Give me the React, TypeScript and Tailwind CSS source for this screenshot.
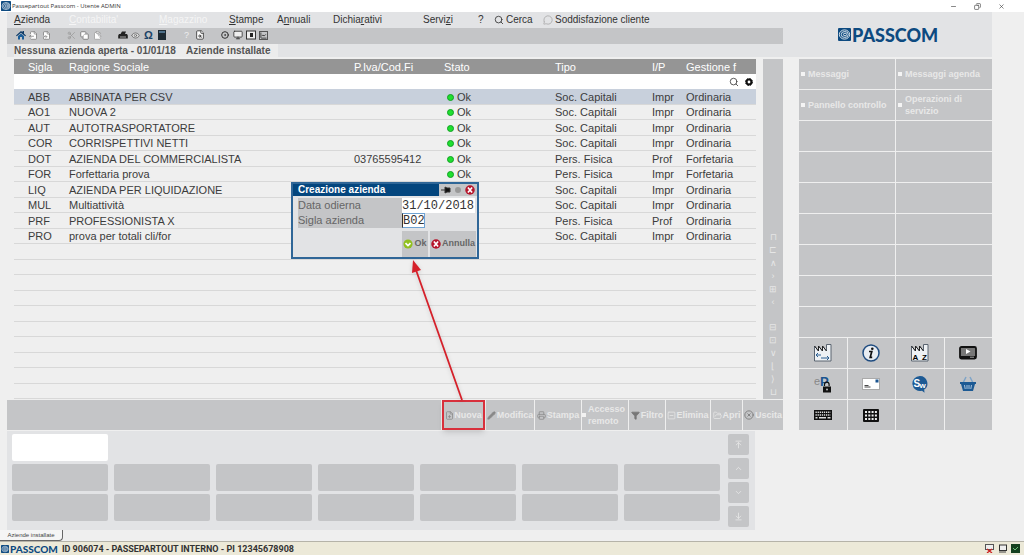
import type { ReactNode } from "react";
import {
    Search, FileOutput, FileSymlink, Scissors, Copy, ClipboardPaste, Printer, Pencil,
    Eye, MessageCircle, Minus, X, Copy as Restore, Monitor, ChartLine, CircleDot,
    FileSearch, Filter, SquareMinus, FolderOpen, CircleX, FilePlus, ArrowUpToLine, ChevronUp, ChevronDown,
    ArrowDownToLine,
} from "lucide-react";

const companies = [
    ["ABB", "ABBINATA PER CSV", "", "Soc. Capitali", "Impr", "Ordinaria"],
    ["AO1", "NUOVA 2", "", "Soc. Capitali", "Impr", "Ordinaria"],
    ["AUT", "AUTOTRASPORTATORE", "", "Soc. Capitali", "Impr", "Ordinaria"],
    ["COR", "CORRISPETTIVI NETTI", "", "Soc. Capitali", "Impr", "Ordinaria"],
    ["DOT", "AZIENDA DEL COMMERCIALISTA", "03765595412", "Pers. Fisica", "Prof", "Forfetaria"],
    ["FOR", "Forfettaria prova", "", "Pers. Fisica", "Impr", "Forfetaria"],
    ["LIQ", "AZIENDA PER LIQUIDAZIONE", "", "Soc. Capitali", "Impr", "Ordinaria"],
    ["MUL", "Multiattività", "", "Soc. Capitali", "Impr", "Ordinaria"],
    ["PRF", "PROFESSIONISTA X", "", "Pers. Fisica", "Prof", "Ordinaria"],
    ["PRO", "prova per totali cli/for", "", "Soc. Capitali", "Impr", "Ordinaria"],
];

const shortcuts = ["Messaggi", "Messaggi agenda", "Pannello controllo", "Operazioni di servizio"];

function Spiral({ className }: { className: string }) {
    return (
        <svg viewBox="0 0 24 24" className={className} fill="none" stroke="#fff" strokeWidth="1.5">
            <rect width="24" height="24" rx="2" fill="#0d4a80" stroke="none" />
            <ellipse cx="12" cy="12" rx="9.5" ry="8.5" />
            <ellipse cx="12.5" cy="12" rx="6.5" ry="5.5" />
            <ellipse cx="13" cy="12" rx="3" ry="2.4" />
        </svg>
    );
}

function MenuBar() {
    return (
        <nav className="flex h-4 items-center pl-[7px] text-[10px] leading-4 whitespace-nowrap text-[#333]">
            <a href="#azienda" className="w-[55px]"><u>A</u>zienda</a>
            <a href="#contabilita" className="w-[90px] text-[#f5f5f5]"><u>C</u>ontabilita'</a>
            <a href="#magazzino" className="w-[70px] text-[#f5f5f5]"><u>M</u>agazzino</a>
            <a href="#stampe" className="w-12"><u>S</u>tampe</a>
            <a href="#annuali" className="w-14">A<u>n</u>nuali</a>
            <a href="#dichiarativi" className="w-[90px]">Dichia<u>r</u>ativi</a>
            <a href="#servizi" className="w-[55px]">Servi<u>z</u>i</a>
            <a href="#aiuto" className="w-4">?</a>
            <a href="#cerca" className="flex w-[49px] items-center gap-0.5"><Search size={10} />Cerca</a>
            <a href="#soddisfazione" className="flex items-center gap-0.5"><MessageCircle size={10} className="text-[#aaa]" />Soddisfazione cliente</a>
        </nav>
    );
}

function Tool({ label, children }: { label: string; children: ReactNode }) {
    return <button aria-label={label} className="flex h-3.5 w-[13px] items-center justify-center">{children}</button>;
}

function ToolBar() {
    return (
        <div className="flex h-4 gap-3 bg-[#c4c5c7] pl-[7px] text-[#333]">
            <div className="flex">
                <Tool label="Home">
                    <svg viewBox="0 0 10 10" className="size-2.5"><path d="M0 5.500L5 1l1.500 1.300V1H8v2.700l2 1.800-.8.800L5 2.800.8 6.300z" fill="#0d3a66" /><path d="M2 6l3-2.500L8 6v3.500H6V7H4v2.500H2z" fill="#1b5e99" /></svg>
                </Tool>
                <Tool label="Esci"><FileOutput size={9} fill="#fff" className="text-[#777]" /></Tool>
                <Tool label="Collega"><FileSymlink size={9} fill="#fff" className="text-[#777]" /></Tool>
            </div>
            <div className="flex">
                <Tool label="Taglia"><Scissors size={9} className="text-[#999]" /></Tool>
                <Tool label="Copia"><Copy size={9} fill="#fff" className="text-[#666]" /></Tool>
                <Tool label="Incolla"><ClipboardPaste size={9} fill="#fff" className="text-[#999]" /></Tool>
            </div>
            <div className="flex">
                <Tool label="Stampa">
                    <svg viewBox="0 0 10 10" className="size-2.5"><path d="M2.500 4L4 1.500h4L7 4h2l.8 1.500V8.500H.2V5.500L1 4z" fill="#222" /><path d="M2 7h6" stroke="#aaa" /></svg>
                </Tool>
                <Tool label="Anteprima"><Eye size={9} fill="#ddd" className="text-[#666]" /></Tool>
                <Tool label="Simboli"><span className="text-[11px] leading-3 font-bold text-[#1c4468]">Ω</span></Tool>
                <Tool label="Calcolatrice">
                    <svg viewBox="0 0 8 10" className="h-2.5 w-2"><rect width="8" height="10" fill="#1d2a33" /><path d="M1 2h6" stroke="#5f88a8" strokeWidth="1.500" /></svg>
                </Tool>
            </div>
            <div className="flex">
                <Tool label="Aiuto"><span className="text-[9px] leading-3 text-[#eee]">?</span></Tool>
                <Tool label="Cerca documento"><FileSearch size={10} fill="#fff" /></Tool>
            </div>
            <div className="flex">
                <Tool label="Registra"><CircleDot size={8} strokeWidth={3} /></Tool>
                <Tool label="Schermo"><Monitor size={10} fill="#eee" /></Tool>
                <Tool label="Pannello">
                    <svg viewBox="0 0 10 10" className="size-2.5"><rect x=".5" y="1" width="9" height="8" fill="#eee" stroke="#333" /><path d="M4 3h3v4H4z" fill="#222" /></svg>
                </Tool>
                <Tool label="Grafico"><ChartLine size={9} strokeWidth={3} className="border border-[#555]" /></Tool>
            </div>
        </div>
    );
}

function CompanyTable() {
    return (
        <table className="min-w-0 flex-1 table-fixed border-separate border-spacing-0 text-left text-[11px] leading-[14px] whitespace-nowrap text-[#3c3c3c]">
            <colgroup>
                <col className="w-[55px]" />
                <col />
                <col className="w-[90px]" />
                <col className="w-[111px]" />
                <col className="w-[97px]" />
                <col className="w-[34px]" />
                <col className="w-[70px]" />
            </colgroup>
            <thead>
                <tr className="h-[15px] bg-[#959595] text-white [&>th]:p-0 [&>th]:font-normal">
                    <th><span className="pl-3.5">Sigla</span></th>
                    <th>Ragione Sociale</th>
                    <th>P.Iva/Cod.Fi</th>
                    <th>Stato</th>
                    <th>Tipo</th>
                    <th>I/P</th>
                    <th>Gestione f</th>
                </tr>
                <tr className="h-[15px] bg-white">
                    <td colSpan={7} className="p-0">
                        <div className="flex h-[15px] items-center gap-1.5 pr-[3px]">
                            <input aria-label="Filtra aziende" className="h-3 min-w-0 flex-1 outline-none" />
                            <button aria-label="Cerca"><Search size={10} /></button>
                            <button aria-label="Impostazioni">
                                <svg viewBox="0 0 10 10" className="size-2">
                                    <circle cx="5" cy="5" r="3" fill="none" stroke="#111" strokeWidth="2.500" />
                                    <circle cx="5" cy="5" r="4.400" fill="none" stroke="#111" strokeWidth="1.200" strokeDasharray="2 1.450" />
                                </svg>
                            </button>
                        </div>
                    </td>
                </tr>
            </thead>
            <tbody>
                {companies.map(([code, name, vat, type, ip, mode]) => (
                    <tr key={code} className="odd:h-4 even:h-[15px] first:bg-[#c8d0dc] [&>td]:border-b [&>td]:border-[#d8d8d8] [&>td]:p-0">
                        <td><span className="pl-3.5">{code}</span></td>
                        <td>{name}</td>
                        <td>{vat}</td>
                        <td>
                            <span className="ml-[3px] inline-block size-[7px] rounded-full border border-[#12a024] bg-[#1fe02f]" /> Ok
                        </td>
                        <td>{type}</td>
                        <td>{ip}</td>
                        <td>{mode}</td>
                    </tr>
                ))}
                {Array.from({ length: 10 }, (_, i) => (
                    <tr key={i} className="odd:h-4 even:h-[15px]">
                        <td colSpan={7} className="border-b border-[#d8d8d8] p-0" />
                    </tr>
                ))}
            </tbody>
        </table>
    );
}

function ScrollStrip() {
    const glyphs = ["⊓", "⊏", "∧", "›", "⊞", "‹"];
    const lower = ["⊟", "⊡", "∨", "⌊", "⟩", "⊔"];
    return (
        <div className="flex w-5 flex-col items-center justify-end gap-3 bg-[#c4c5c7] text-[9px] leading-[13px] text-[#e6e6e6]">
            <div className="flex flex-col items-center">{glyphs.map((g) => <span key={g}>{g}</span>)}</div>
            <div className="flex flex-col items-center">{lower.map((g) => <span key={g}>{g}</span>)}</div>
        </div>
    );
}

function RoundX() {
    return (
        <svg viewBox="0 0 12 12" className="size-2.5 shrink-0">
            <circle cx="6" cy="6" r="5.7" fill="#b5152b" />
            <path d="M3.5 3l5 6M8.5 3l-5 6" stroke="#fff" strokeWidth="2" />
        </svg>
    );
}

function NewCompanyDialog() {
    return (
        <form className="absolute top-[123px] left-[284px] flex h-[77px] w-[188px] flex-col border-2 border-[#2f6697] bg-[#e2e3e5] text-[11px] text-[#666]">
            <div className="flex h-3 items-center bg-[#04467e]">
                <h2 className="flex-1 pl-[5px] text-[10px] leading-3 font-bold text-white">Creazione azienda</h2>
                <div className="flex h-3 items-center gap-1 bg-[#c4c5c7] px-0.5">
                    <svg viewBox="0 0 10 8" className="h-2 w-2.5"><path d="M0 4h4M4 1l2 1h3v4H6L4 7z" fill="#111" stroke="#333" /></svg>
                    <span className="size-1.5 rounded-full bg-[#999]" />
                    <button type="button" aria-label="Chiudi"><RoundX /></button>
                </div>
            </div>
            <div className="mt-0.5 flex h-[15px] pl-[5px]">
                <label htmlFor="data" className="w-[104px] bg-[#c4c5c7] leading-[14px]">Data odierna</label>
                <input id="data" defaultValue="31/10/2018" className="h-[15px] w-[73px] bg-white font-['Liberation_Mono',monospace] text-xs text-[#333]" />
            </div>
            <div className="flex h-[15px] pl-[5px]">
                <label htmlFor="sigla" className="w-[104px] bg-[#c4c5c7] leading-[15px]">Sigla azienda</label>
                <input id="sigla" defaultValue="B02" className="h-[15px] w-[23px] border border-[#6fa3d3] border-l-[#333] bg-white font-['Liberation_Mono',monospace] text-xs text-[#333]" />
            </div>
            <div className="flex flex-1 items-end justify-end gap-0.5 pr-px text-[9px] font-bold">
                <button type="button" className="flex h-[26px] w-[26px] items-center justify-center gap-px bg-[#c4c5c7]">
                    <svg viewBox="0 0 12 12" className="size-2.5 shrink-0"><circle cx="6" cy="6" r="5.5" fill="#91c01f" /><path d="M3 5l3 3 3-3" fill="none" stroke="#fff" strokeWidth="2" /></svg>
                    Ok
                </button>
                <button type="button" className="flex h-[26px] w-[46px] items-center justify-center gap-px bg-[#c4c5c7]"><RoundX />Annulla</button>
            </div>
        </form>
    );
}

function ActionBar() {
    const base = "flex items-center justify-center bg-[#c4c5c7]";
    return (
        <div className="mt-px flex h-[30px] gap-px text-[9px] leading-3 font-bold text-[#e8e8e8]">
            <div className="flex-1 bg-[#c4c5c7]" />
            <button className={`${base} w-[43px] border-2 border-[#d8303c] shadow-md`}><FilePlus size={9} className="text-[#888]" />Nuova</button>
            <button className={`${base} w-12 gap-px`}><Pencil size={9} fill="#888" className="text-[#888]" />Modifica</button>
            <button className={`${base} w-[46px] gap-px`}><Printer size={9} className="text-[#888]" />Stampa</button>
            <button className={`${base} w-[46px] gap-0.5 text-left`}><span className="size-1 shrink-0 bg-[#f2f2f2]" /><span>Accesso remoto</span></button>
            <button className={`${base} w-9 gap-px`}><Filter size={9} fill="#777" className="text-[#777]" />Filtro</button>
            <button className={`${base} w-11`}><SquareMinus size={9} />Elimina</button>
            <button className={`${base} w-[31px] gap-px`}><FolderOpen size={9} />Apri</button>
            <button className={`${base} w-10 gap-px`}><CircleX size={10} className="text-[#777]" />Uscita</button>
        </div>
    );
}

function Factory({ children }: { children: ReactNode }) {
    return (
        <svg viewBox="0 0 18 18" className="size-[18px]">
            <path d="M.5 17V2l4 5V2l4 5V2l4 5V.5h4.5V17z" fill="#eef1f4" stroke="#5a6470" />
            <path d="M.5 2l4 5V2l4 5V2l4 5" fill="none" stroke="#222" />
            {children}
        </svg>
    );
}

function AppIcons() {
    const cell = "flex items-center justify-center bg-[#c4c5c7]";
    return (
        <div className="grid auto-rows-[30px] grid-cols-4 gap-px">
            <button aria-label="Cambia azienda" className={cell}>
                <Factory><path d="M2 11h5M4 9l-2 2 2 2M7 14h8M13 12l2 2-2 2" fill="none" stroke="#2b5f92" /></Factory>
            </button>
            <button aria-label="Informazioni" className={cell}>
                <svg viewBox="0 0 18 18" className="size-[18px]">
                    <circle cx="9" cy="9" r="8" fill="#e9edf2" stroke="#1f4c80" strokeWidth="1.5" />
                    <circle cx="10.3" cy="4.8" r="1.3" fill="#111" />
                    <path d="M7 7.5h2.8L8.2 13.3h2" fill="none" stroke="#111" strokeWidth="1.7" />
                </svg>
            </button>
            <button aria-label="Aziende A-Z" className={cell}>
                <Factory><text x="1.5" y="15.5" fontSize="8" fontWeight="bold">A</text><text x="11" y="15.5" fontSize="8" fontWeight="bold">Z</text></Factory>
            </button>
            <button aria-label="Video" className={cell}>
                <svg viewBox="0 0 18 14" className="h-3.5 w-[18px]">
                    <rect x="1" y="1" width="16" height="11.5" rx="1.5" fill="#777" stroke="#111" strokeWidth="1.8" />
                    <path d="M1 10h16v2.5H1z" fill="#111" /><path d="M7 3l4.500 2.500L7 8z" fill="#fff" />
                    <path d="M11 11.200h4" stroke="#ccc" strokeWidth=".8" />
                </svg>
            </button>
            <button aria-label="ePass" className={cell}>
                <svg viewBox="0 0 18 18" className="size-[18px]">
                    <text x="0" y="10" fontSize="11" fill="#888">e</text>
                    <text x="6" y="11" fontSize="13" fontWeight="bold" fill="#1b5590">P</text>
                    <path d="M10.500 11V9.500a2.300 2.300 0 0 1 4.600 0V11" fill="none" stroke="#111" strokeWidth="1.200" />
                    <rect x="9" y="11.500" width="8" height="6" fill="#111" /><circle cx="13" cy="14.500" r="1" fill="#bbb" />
                </svg>
            </button>
            <button aria-label="Posta" className={cell}>
                <svg viewBox="0 0 18 12" className="h-3 w-[18px]">
                    <rect x=".5" y=".5" width="17" height="11" fill="#fff" stroke="#aaa" />
                    <rect x="13.500" y="1.500" width="3" height="3" fill="#1b5590" />
                    <path d="M2.500 7.500h4M2.500 9h6" stroke="#333" strokeWidth=".9" />
                </svg>
            </button>
            <button aria-label="Sw" className={cell}>
                <svg viewBox="0 0 18 18" className="size-[18px]">
                    <path d="M9 1a7.500 7.500 0 1 0 2 14.700l2.500 2-.3-3.100A7.500 7.500 0 0 0 9 1z" fill="#1d5a94" />
                    <text x="2.500" y="11.500" fontSize="10" fontWeight="bold" fill="#fff">S</text>
                    <text x="8.500" y="13" fontSize="8" fontWeight="bold" fill="#fff">w</text>
                </svg>
            </button>
            <button aria-label="Acquisti" className={cell}>
                <svg viewBox="0 0 18 16" className="h-4 w-[18px]">
                    <path d="M4 7l3-6M14 7l-3-6" stroke="#7fa5c9" strokeWidth="1.500" />
                    <path d="M1 6h16v2h-1l-2 7H4L2 8H1z" fill="#1d5a94" />
                    <path d="M5.500 9l.7 4M8 9v4M10 9v4M12.500 9l-.7 4" stroke="#a9c4de" />
                </svg>
            </button>
            <button aria-label="Tastiera" className={cell}>
                <svg viewBox="0 0 18 10" className="h-2.5 w-[18px]">
                    <rect width="18" height="10" fill="#111" />
                    <path d="M1.500 2.300h15M1.500 5h15" stroke="#ddd" strokeWidth="1.400" strokeDasharray="1.300 .8" />
                    <path d="M1.500 7.700h2M5 7.700h7M13.500 7.700h3" stroke="#ddd" strokeWidth="1.400" />
                </svg>
            </button>
            <button aria-label="Griglia" className={cell}>
                <svg viewBox="0 0 16 13" className="h-[13px] w-4">
                    <rect width="16" height="13" rx="1" fill="#111" />
                    <path d="M2 3h12M2 6.500h12M2 10h12" stroke="#eee" strokeWidth="2" strokeDasharray="2 1.300" />
                </svg>
            </button>
            <div className="bg-[#c4c5c7]" />
            <div className="bg-[#c4c5c7]" />
        </div>
    );
}

function SidePanel() {
    return (
        <aside className="flex w-[193px] flex-col gap-px">
            <div className="grid auto-rows-[30px] grid-cols-2 gap-px text-[#e8e8e8]">
                {Array.from({ length: 18 }, (_, i) => (
                    <button key={i} className="flex items-center gap-[3px] bg-[#c4c5c7] pr-1 pl-0.5 text-left text-[9px] leading-3 font-bold">
                        {shortcuts[i] && <><span className="size-1 shrink-0 bg-[#f4f4f4]" /><span>{shortcuts[i]}</span></>}
                    </button>
                ))}
            </div>
            <AppIcons />
        </aside>
    );
}

function FunctionKeys() {
    const nav = "flex h-[21px] w-[21px] items-center justify-center rounded-xs bg-[#c4c5c7]";
    return (
        <div className="mt-px mr-7 flex h-[99px] gap-2 bg-[#e2e3e5] pt-[3px] pr-1.5 pl-[5px]">
            <div className="grid flex-1 auto-rows-[27px] grid-cols-7 gap-x-1.5 gap-y-[3px]">
                {Array.from({ length: 21 }, (_, i) => (
                    i > 0 && i < 7
                        ? <div key={i} />
                        : <button key={i} aria-label={`Funzione ${i + 1}`} className="rounded-xs bg-[#c4c5c7] first:bg-white" />
                ))}
            </div>
            <div className="flex flex-col gap-[3px] text-[#eaeaea]">
                <button aria-label="Inizio" className={nav}><ArrowUpToLine size={9} /></button>
                <button aria-label="Su" className={nav}><ChevronUp size={9} /></button>
                <button aria-label="Giù" className={nav}><ChevronDown size={9} /></button>
                <button aria-label="Fine" className={nav}><ArrowDownToLine size={9} /></button>
            </div>
        </div>
    );
}

export default function App() {
    return (
        <div className="flex min-h-screen flex-col bg-[#efefef] font-['Liberation_Sans',Arial,sans-serif]">
            <div className="flex h-3 items-center bg-white pr-[19px] pl-px text-[#333]">
                <Spiral className="size-2.5" />
                <h1 className="flex-1 pl-px font-['Open_Sans',sans-serif] text-[6px] leading-3">Passepartout Passcom - Utente ADMIN</h1>
                <div className="flex gap-[17px]">
                    <button aria-label="Riduci"><Minus size={7} /></button>
                    <button aria-label="Ripristina"><Restore size={7} className="-scale-x-100" /></button>
                    <button aria-label="Chiudi finestra"><X size={7} /></button>
                </div>
            </div>
            <div className="flex flex-1 flex-col pr-8 pl-[7px]">
                <header className="flex h-[45px] gap-4 bg-[#e2e3e5]">
                    <div className="min-w-0 flex-1">
                        <MenuBar />
                        <ToolBar />
                        <div className="flex h-[13px] pl-[7px] text-[10px] leading-[13px] font-bold text-[#555]">
                            <span className="w-[172px] bg-[#ececec]">Nessuna azienda aperta - 01/01/18</span>
                            <span className="w-[92px] bg-[#ececec]">Aziende installate</span>
                        </div>
                    </div>
                    <div className="flex w-[193px] items-center gap-px pl-[39px] text-[#0d4a80]">
                        <Spiral className="size-[13px]" />
                        <span className="font-['Lato',sans-serif] text-lg leading-5 font-black">PASSCOM</span>
                    </div>
                </header>
                <main className="mt-0.5 flex gap-4">
                    <div className="relative min-w-0 flex-1">
                        <div className="flex gap-[7px] pl-[7px]">
                            <CompanyTable />
                            <ScrollStrip />
                        </div>
                        <ActionBar />
                        <NewCompanyDialog />
                        {/* callout from "Nuova" to the dialog */}
                        <svg viewBox="0 0 60 146" className="pointer-events-none absolute top-[199px] right-[319px] h-[146px] w-[60px] drop-shadow-sm">
                            <path d="M58 142L12 12" stroke="#d5202a" strokeWidth="1.800" />
                            <path d="M9 2l8 10-9 3z" fill="#d5202a" />
                        </svg>
                    </div>
                    <SidePanel />
                </main>
                <div className="mr-[209px]">
                    <FunctionKeys />
                </div>
            </div>
            <div className="flex">
                <button className="h-[11px] w-[63px] rounded-br-sm border-r border-b border-[#666] bg-[#f5f5f5] text-[6px] leading-[9px] text-[#444]">Aziende installate</button>
            </div>
            <footer className="flex h-3.5 items-center border-t border-[#b5b3a8] bg-[#ece9d8] pr-1 pl-px text-[#333]">
                <Spiral className="mr-px size-2" />
                <span className="font-['Lato',sans-serif] text-[10px] leading-3 font-black text-[#0d4a80]">PASSCOM</span>
                <span className="flex-1 pl-1 font-['Roboto',sans-serif] text-[9px] leading-3 font-bold">ID 906074 - PASSEPARTOUT INTERNO - PI 12345678908</span>
                <div className="flex gap-1">
                    <svg viewBox="0 0 9 9" className="size-[9px]"><rect x=".5" y=".5" width="8" height="5" fill="#eee" stroke="#555" /><path d="M2 5l5 4M7 5L2 9" stroke="#c22" strokeWidth="1.300" /></svg>
                    <svg viewBox="0 0 9 9" className="size-[9px]"><rect x="1.500" y="1" width="7" height="5.500" fill="#eee" stroke="#333" /><path d="M1 8h7" stroke="#444" /></svg>
                    <svg viewBox="0 0 9 9" className="size-[9px]"><rect width="9" height="9" fill="#14401f" /><path d="M2 4l2 2 3-3" fill="none" stroke="#6fc27c" /></svg>
                </div>
            </footer>
        </div>
    );
}
